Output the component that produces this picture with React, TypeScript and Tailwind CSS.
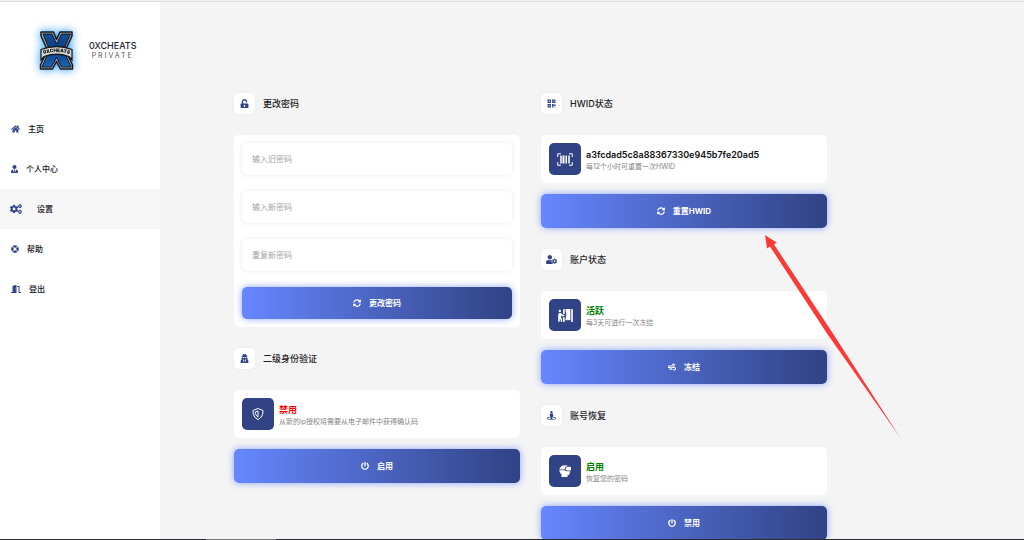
import type { ReactNode } from "react";
import {
  FaCogs,
  FaDoorOpen,
  FaHome,
  FaLifeRing,
  FaPersonBooth,
  FaPowerOff,
  FaQrcode,
  FaStreetView,
  FaSyncAlt,
  FaUnlockAlt,
  FaUserCog,
  FaUserSecret,
  FaUserTie,
  FaWind,
} from "react-icons/fa";

const menuItems = [
  { id: "home", label: "主页", icon: FaHome, iconSize: "h-2 w-[9px]" },
  { id: "profile", label: "个人中心", icon: FaUserTie, iconSize: "h-2 w-[7px]" },
  { id: "settings", label: "设置", icon: FaCogs, iconSize: "h-[10px] w-3" },
  { id: "help", label: "帮助", icon: FaLifeRing, iconSize: "h-2 w-2" },
  { id: "logout", label: "登出", icon: FaDoorOpen, iconSize: "h-2 w-[10px]" },
];

const passwordFields = [
  { id: "old-password", label: "输入旧密码" },
  { id: "new-password", label: "输入新密码" },
  { id: "repeat-password", label: "重复新密码" },
];

function Logo() {
  return (
    <svg
      viewBox="0 0 66 78"
      className="h-[39px] w-[33px] shrink-0 overflow-visible drop-shadow-[0_0_5px_#1e96ff]"
      aria-hidden="true"
    >
      <defs>
        <linearGradient id="logoBlue" x1="0" y1="0" x2="0" y2="1">
          <stop offset="0" stopColor="#124f9c" />
          <stop offset="0.45" stopColor="#0d3d80" />
          <stop offset="1" stopColor="#1a65b8" />
        </linearGradient>
      </defs>
      <path
        d="M2 2H27L33 17L40 2H64V10L51 38L65 68V76H41L33 61L25 76H1V68L15 38L2 10Z"
        fill="#a9adb2"
        stroke="#15181d"
        strokeWidth="3"
        strokeLinejoin="round"
      />
      <path
        d="M6 6H24L33 26L43 6H61L47 38L62 72H43L33 53L23 72H4L19 38Z"
        fill="url(#logoBlue)"
        stroke="#10141c"
        strokeWidth="2"
      />
      <path d="M2 37Q33 25 64 37V58L58 51Q33 42 8 51L2 58Z" fill="#d9d9d6" stroke="#15181d" strokeWidth="2.5" />
      <path id="ribbonLine" d="M5 47Q33 37 61 47" fill="none" />
      <text fontSize="9.500" fontWeight="900" fill="#0b0d10" textAnchor="middle" fontFamily="Inter, sans-serif">
        <textPath href="#ribbonLine" startOffset="50%">
          0XCHEATS
        </textPath>
      </text>
    </svg>
  );
}

function BarcodeIcon() {
  return (
    <svg viewBox="0 0 32 26" className="h-[13px] w-4" fill="none" stroke="currentColor" aria-hidden="true">
      <path d="M8 1.500H1.500V8M24 1.500H30.500V8M8 24.500H1.500V18M24 24.500H30.500V18" strokeWidth="2" />
      <path d="M8 5V21M24 5V21" strokeWidth="3" />
      <path d="M13 5V21" strokeWidth="4" />
      <path d="M18.500 5V21" strokeWidth="3" />
    </svg>
  );
}

function ShieldIcon() {
  return (
    <svg viewBox="0 0 24 24" className="h-3 w-3" fill="none" stroke="currentColor" aria-hidden="true">
      <path d="M12 1L22 5C22.500 13 19 20 12 23C5 20 1.500 13 2 5Z" strokeWidth="2" strokeLinejoin="round" />
      <path d="M12 6V18C8.500 16 6.500 12 6.500 8Z" strokeWidth="2" />
    </svg>
  );
}

function HeadIcon() {
  return (
    <svg viewBox="0 0 24 24" className="h-3 w-3" fill="currentColor" aria-hidden="true">
      <path d="M0.500 9C2 3.500 6.500 0.500 12 0.500C14.500 0.500 16.500 1 18 2C14 2.500 11.500 5 11 9Z" />
      <path d="M13 8.500C13.500 5.500 15.500 3.500 18 3.500H22C23.200 3.500 24 4.300 24 5.500V9C24 10.200 23.200 11 22 11H15Z" />
      <path d="M0.500 10.500L11 10.500C12.500 12 14 12.500 16 12.500H22.500L21 18C20.700 19.300 20 20 18.500 20H17V24H5V18.500C2.500 16.500 0.800 13.500 0.500 10.500Z" />
    </svg>
  );
}

function SectionTitle({ icon, children }: { icon: ReactNode; children: ReactNode }) {
  return (
    <div className="mb-[21px] flex items-center gap-2">
      <span className="flex h-[21px] w-[21px] items-center justify-center rounded-[5px] bg-white text-[9px] text-[#314489] shadow-[0_0_4px_rgba(0,0,0,0.04)]">
        {icon}
      </span>
      <h2 className="text-[9px] leading-3 font-medium text-[#1d1d25]">{children}</h2>
    </div>
  );
}

function GradientButton({ icon, className = "", children }: { icon: ReactNode; className?: string; children: ReactNode }) {
  return (
    <button
      type="button"
      className={`flex w-full items-center justify-center gap-2 rounded-[5px] bg-linear-to-r from-[#6687ff] to-[#314385] text-[8px] leading-3 font-bold text-white shadow-[0_0_7px_rgba(102,135,255,0.75)] ${className}`}
    >
      {icon}
      {children}
    </button>
  );
}

type StatusSectionProps = {
  titleIcon: ReactNode;
  title: string;
  icon: ReactNode;
  status: string;
  statusColor: string;
  note: string;
  actionIcon: ReactNode;
  action: string;
};

function StatusSection({ titleIcon, title, icon, status, statusColor, note, actionIcon, action }: StatusSectionProps) {
  return (
    <section>
      <SectionTitle icon={titleIcon}>{title}</SectionTitle>
      <div className="mb-[11px] flex items-center gap-[5px] rounded-[5px] bg-white p-2">
        <span className="flex h-8 w-8 shrink-0 items-center justify-center rounded-[5px] bg-[#314385] text-white">
          {icon}
        </span>
        <div className="pt-[3px]">
          <p className={`text-[9px] leading-3 font-semibold ${statusColor}`}>{status}</p>
          <p className="text-[7px] leading-3 text-[#858585]">{note}</p>
        </div>
      </div>
      <GradientButton icon={actionIcon} className="h-[34px]">
        {action}
      </GradientButton>
    </section>
  );
}

function Sidebar() {
  return (
    <aside className="w-40 shrink-0 bg-white">
      <div className="mb-[11px] flex h-24 items-center gap-4 pl-10">
        <Logo />
        <div className="pt-[2px] text-center">
          <div className="text-[9px] leading-[10px] font-medium text-[#22222a]">0XCHEATS</div>
          <div className="text-[7px] leading-[10px] tracking-[2px] text-[#55555c]">PRIVATE</div>
        </div>
      </div>
      <nav>
        {menuItems.map((item) => {
          const Icon = item.icon;
          const active = item.id === "settings";
          return (
            <a
              key={item.id}
              href={`#${item.id}`}
              className={`flex h-10 items-center text-[8px] font-medium text-[#111118] ${
                active ? "gap-[15px] bg-[#f6f6f6] pl-[10px]" : "gap-2 pl-[11px]"
              }`}
            >
              <Icon className={`shrink-0 text-[#314489] ${item.iconSize}`} />
              {item.label}
            </a>
          );
        })}
      </nav>
    </aside>
  );
}

function PasswordSection() {
  return (
    <section>
      <SectionTitle icon={<FaUnlockAlt />}>更改密码</SectionTitle>
      <form className="flex flex-col gap-4 rounded-[5px] bg-white p-2">
        {passwordFields.map((field) => (
          <input
            key={field.id}
            id={field.id}
            type="password"
            aria-label={field.label}
            placeholder={field.label}
            className="h-8 w-full rounded-[5px] bg-white px-[10px] text-[8px] shadow-[0_0_4px_rgba(0,0,0,0.1)] outline-none placeholder:text-[#a3a3a3]"
          />
        ))}
        <GradientButton icon={<FaSyncAlt />} className="h-8">
          更改密码
        </GradientButton>
      </form>
    </section>
  );
}

export default function App() {
  return (
    <div
      lang="zh-CN"
      className="relative flex h-screen flex-col overflow-hidden bg-[#f4f4f4] font-['Inter','Noto_Sans_CJK_SC',sans-serif]"
    >
      <div className="h-[2px] shrink-0 border-b border-[#dcdede] bg-[#f2f2f2]" />
      <div className="flex min-h-0 flex-1">
        <Sidebar />
        <main className="flex min-w-0 flex-1 items-start gap-[21px] overflow-hidden pt-[91px] pr-[197px] pl-[74px]">
          <div className="flex min-w-0 flex-1 flex-col gap-[21px]">
            <PasswordSection />
            <StatusSection
              titleIcon={<FaUserSecret />}
              title="二级身份验证"
              icon={<ShieldIcon />}
              status="禁用"
              statusColor="text-[#ff0000]"
              note="从新的ip授权将需要从电子邮件中获得确认码"
              actionIcon={<FaPowerOff />}
              action="启用"
            />
          </div>
          <div className="flex min-w-0 flex-1 flex-col gap-[21px]">
            <StatusSection
              titleIcon={<FaQrcode />}
              title="HWID状态"
              icon={<BarcodeIcon />}
              status="a3fcdad5c8a88367330e945b7fe20ad5"
              statusColor="text-[#111111]"
              note="每12个小时可重置一次HWID"
              actionIcon={<FaSyncAlt />}
              action="重置HWID"
            />
            <StatusSection
              titleIcon={<FaUserCog className="h-[9px] w-[11px]" />}
              title="账户状态"
              icon={<FaPersonBooth className="h-[13px] w-[15px]" />}
              status="活跃"
              statusColor="text-[#008000]"
              note="每3天可进行一次冻结"
              actionIcon={<FaWind />}
              action="冻结"
            />
            <StatusSection
              titleIcon={<FaStreetView />}
              title="账号恢复"
              icon={<HeadIcon />}
              status="启用"
              statusColor="text-[#008000]"
              note="恢复您的密码"
              actionIcon={<FaPowerOff />}
              action="禁用"
            />
          </div>
        </main>
      </div>
      <div className="flex h-px shrink-0 bg-[#2b2d30]">
        <span className="ml-[206px] w-[70px] bg-[#77797b]" />
      </div>
      {/* hand-drawn pointer to the HWID reset button */}
      <svg
        viewBox="0 0 136 204"
        className="pointer-events-none absolute top-[235px] left-[765px] h-[204px] w-[136px]"
        aria-hidden="true"
      >
        <path d="M0 0L11.500 7.500L9 9.500L65 94L135.500 203L61 97L5 11.500L2 13.500Z" fill="#fb3a38" />
      </svg>
    </div>
  );
}
